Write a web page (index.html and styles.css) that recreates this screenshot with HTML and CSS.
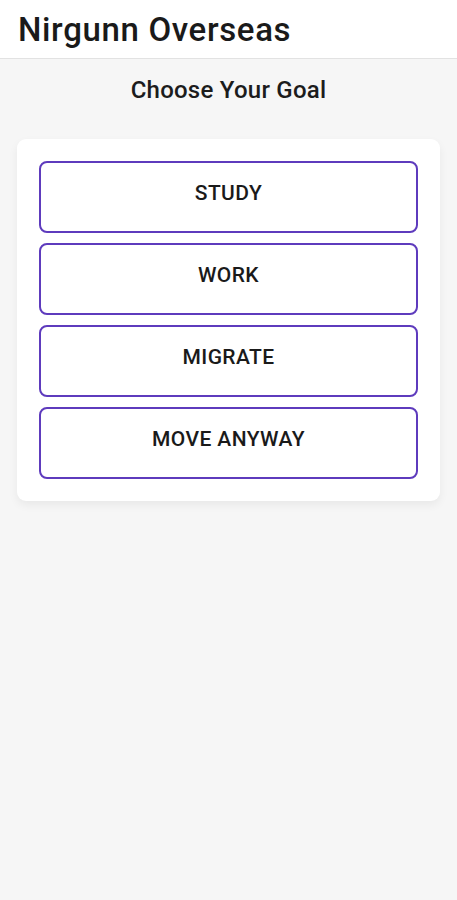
FILE: index.html
```html
<!DOCTYPE html>
<html lang="en">
<head>
  <meta charset="UTF-8" />
  <title>Nirgunn Overseas</title>
  <link rel="stylesheet" href="styles.css">
</head>
<body>
  <header class="app-bar">
    <h1 class="app-title">Nirgunn Overseas</h1>
  </header>
  <main class="content">
    <h2 class="heading">Choose Your Goal</h2>
    <div class="card">
      <button class="goal-button">STUDY</button>
      <button class="goal-button">WORK</button>
      <button class="goal-button">MIGRATE</button>
      <button class="goal-button">MOVE ANYWAY</button>
    </div>
  </main>
</body>
</html>
```

FILE: styles.css
```css
body {
  margin: 0;
  background-color: #f6f6f6;
  color: #1c1c1c;
  font-family: Roboto, "Liberation Sans", sans-serif;
  height: 100vh;
}
.app-bar {
  background-color: #ffffff;
  height: 59px;
  border-bottom: 1px solid #e2e2e2;
  box-sizing: border-box;
  padding-left: 18px;
  display: flex;
  align-items: center;
}
.app-title {
  margin: 0;
  font-size: 33px;
  font-weight: 500;
  letter-spacing: 0.65px;
  color: #1a1a1a;
}
.content {
  padding: 0 17px;
}
.heading {
  margin: 0;
  padding-top: 17px;
  font-size: 24px;
  font-weight: 500;
  letter-spacing: 0.25px;
  text-align: center;
  line-height: 28px;
}
.card {
  margin-top: 35px;
  background-color: #ffffff;
  border-radius: 9px;
  box-shadow: 0 4px 10px rgba(0, 0, 0, 0.06);
  padding: 22px;
  display: flex;
  flex-direction: column;
  gap: 10px;
}
.goal-button {
  height: 72px;
  background-color: #ffffff;
  border: 2px solid #5e3bbd;
  border-radius: 8px;
  font-family: Roboto, "Liberation Sans", sans-serif;
  font-size: 21px;
  font-weight: 500;
  letter-spacing: 0.4px;
  color: #1a1a1a;
  padding: 0 0 8px 0;
  cursor: pointer;
}
```
